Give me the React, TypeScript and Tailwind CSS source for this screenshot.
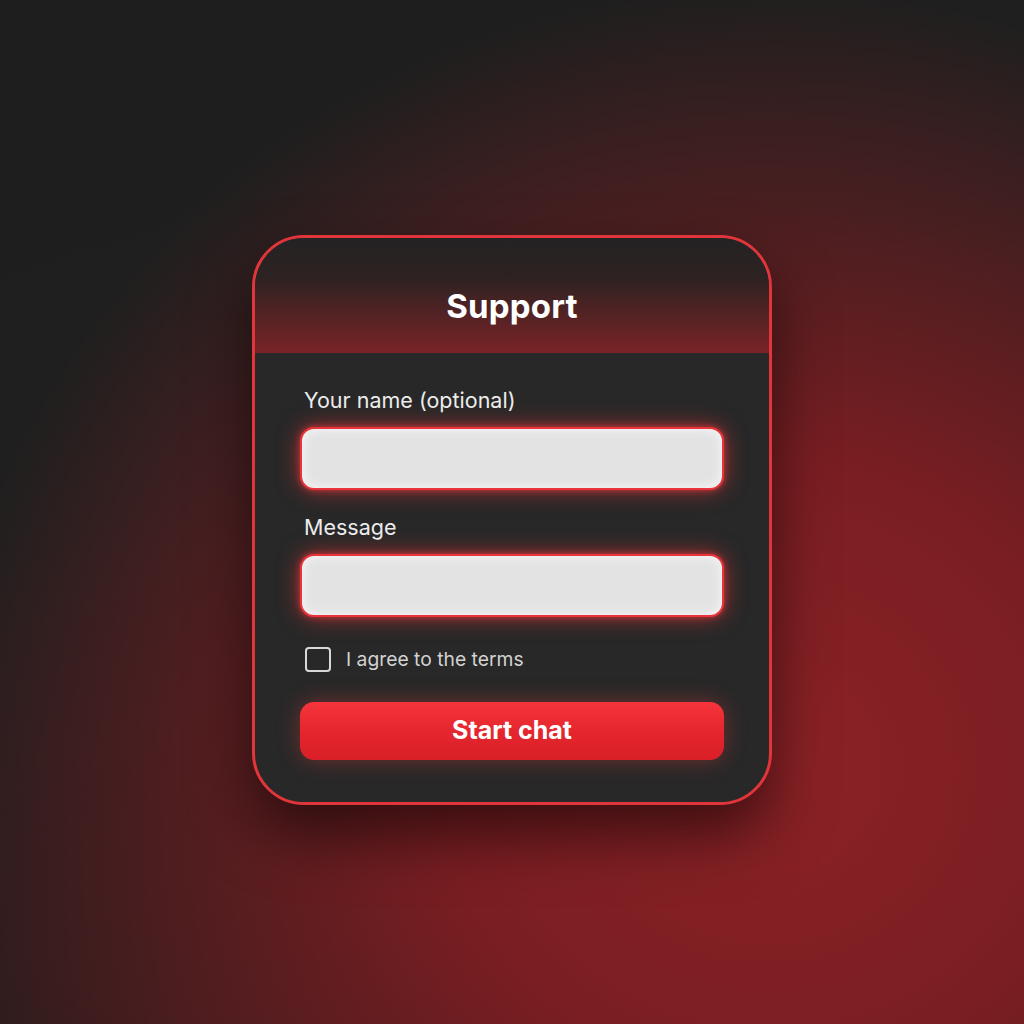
import React from 'react';

const Field: React.FC<{ label: string; className?: string }> = ({ label, className }) => (
  <div className={className}>
    <label className="block text-[21.5px] leading-[28px] text-[#ececec] pl-[4px]">{label}</label>
    <div className="mt-[13px] h-[63px] rounded-[14px] border-2 border-[#e8343a] bg-[#e3e3e3] shadow-[0_0_22px_rgba(255,50,55,0.6),0_0_6px_rgba(255,70,70,0.6),inset_0_0_12px_rgba(255,255,255,0.8)]" />
  </div>
);

export default function App() {
  return (
    <div
      className="h-screen w-full flex justify-center pt-[235px] bg-[#1f1f1f] bg-[radial-gradient(ellipse_120%_120%_at_50%_50%,rgba(0,0,0,0)_60%,rgba(20,8,8,0.45)_100%),radial-gradient(ellipse_90%_85%_at_75%_75%,#8c2226_0%,#7a1e22_35%,rgba(50,24,24,0)_90%),linear-gradient(160deg,#1e1e1e_0%,#1f1f1f_40%,#3a1a1b_100%)]"
      style={{ fontFamily: 'Inter, "Noto Sans", sans-serif' }}
    >
      <div className="w-[520px] h-[570px] rounded-[52px] border-[3px] border-[#e0353a] bg-[#282828] overflow-hidden flex flex-col shadow-[0_30px_60px_rgba(0,0,0,0.55)]">
        <div className="h-[115px] shrink-0 flex items-center justify-center pt-[22px] bg-[linear-gradient(180deg,#232323_0%,#2e2222_35%,#7a2327_100%)]">
          <h1 className="text-[33px] font-bold text-white tracking-[0.2px]">Support</h1>
        </div>
        <div className="px-[45px] pt-[33px] flex flex-col">
          <Field label="Your name (optional)" />
          <Field label="Message" className="mt-[23px]" />
          <label className="mt-[28px] flex items-center gap-[15px] pl-[5px]">
            <span className="w-[26px] h-[25px] rounded-[4px] border-2 border-[#d8d8d8]" />
            <span className="text-[19.3px] text-[#d2d2d2]">I agree to the terms</span>
          </label>
          <button className="mt-[28px] h-[58px] rounded-[14px] text-[25px] font-bold text-white bg-[linear-gradient(180deg,#f5343b_0%,#e4252d_55%,#d91f27_100%)] shadow-[0_0_22px_rgba(255,60,60,0.35)]">
            Start chat
          </button>
        </div>
      </div>
    </div>
  );
}
